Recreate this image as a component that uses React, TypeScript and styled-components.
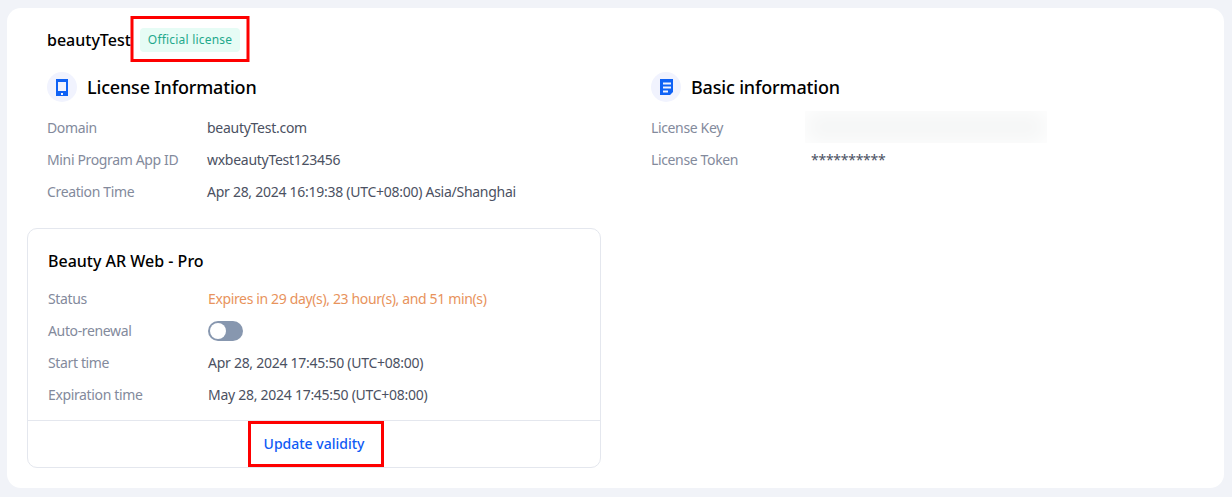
import React from "react"
import styled, { createGlobalStyle } from "styled-components"

const GlobalStyle = createGlobalStyle`
  html, body {
    margin: 0;
    padding: 0;
    background: #f1f3f8;
    font-family: "Noto Sans", "Open Sans", sans-serif;
  }
`

const Page = styled.div`
  width: 1232px;
  height: 497px;
  box-sizing: border-box;
  padding: 8px 8px 9px 7px;
`

const Panel = styled.div`
  box-sizing: border-box;
  height: 480px;
  background: #fff;
  border-radius: 14px;
  padding: 17px 20px 20px 20px;
`

const TitleRow = styled.div`
  display: flex;
  align-items: center;
  height: 30px;
  padding-left: 20px;
`

const AppName = styled.span`
  font-size: 16px;
  font-weight: 500;
  letter-spacing: 0;
  color: #000;
`

const Annotated = styled.div`
  position: relative;
  display: flex;
  justify-content: center;
`

const RedBox = styled.div<{ $w: number; $h: number; $dx?: number; $dy?: number }>`
  position: absolute;
  top: calc(50% + ${p => p.$dy ?? 0}px);
  left: calc(50% + ${p => p.$dx ?? 0}px);
  width: ${p => p.$w}px;
  height: ${p => p.$h}px;
  box-sizing: border-box;
  border: 3px solid #fe0000;
  transform: translate(-50%, -50%);
`

const Badge = styled.span`
  margin-left: 9px;
  padding: 0 8px;
  height: 24px;
  line-height: 24px;
  border-radius: 4px;
  background: #e6fcf5;
  color: #1fa98c;
  font-size: 12px;
  letter-spacing: 0.2px;
`

const Columns = styled.div`
  display: grid;
  grid-template-columns: 604px 1fr;
  margin-top: 17px;
`

const Section = styled.div`
  padding-left: 20px;
`

const SectionHead = styled.div`
  display: flex;
  align-items: center;
  gap: 10px;
  height: 30px;
  margin-bottom: 9px;
`

const IconCircle = styled.div`
  width: 30px;
  height: 30px;
  border-radius: 50%;
  background: #f1f3fe;
  display: flex;
  align-items: center;
  justify-content: center;
`

const SectionTitle = styled.h2`
  margin: 0;
  font-size: 18px;
  font-weight: 500;
  letter-spacing: -0.17px;
  color: #000;
`

const Row = styled.div`
  display: grid;
  grid-template-columns: 160px 1fr;
  align-items: center;
  height: 32px;
  font-size: 14px;
`

const Label = styled.span`
  color: #838a9c;
  letter-spacing: -0.36px;
`

const Value = styled.span<{ $tone?: string }>`
  color: ${p => p.$tone ?? "#4b5162"};
  letter-spacing: ${p => (p.$tone ? "-0.36px" : "-0.27px")};
`

const BlurredKey = styled.div`
  width: 242px;
  height: 32px;
  margin-left: -6px;
  background: #f5f6f6;
  box-shadow: inset 0 0 22px #fff;
`

const ProductCard = styled.div`
  width: 574px;
  height: 240px;
  box-sizing: border-box;
  margin-top: 21px;
  border: 1px solid #e4e7ee;
  border-radius: 10px;
  display: flex;
  flex-direction: column;
`

const CardBody = styled.div`
  flex: 1;
  padding: 17px 20px 0;
`

const CardTitle = styled.div`
  font-size: 16px;
  font-weight: 500;
  color: #000;
  line-height: 30px;
  margin-bottom: 6px;
`

const CardFooter = styled.div`
  height: 46px;
  border-top: 1px solid #e4e7ee;
  display: flex;
  align-items: center;
  justify-content: center;
`

const LinkButton = styled.a`
  font-size: 14px;
  line-height: 18px;
  font-weight: 500;
  color: #0f5bf5;
`

const Toggle = styled.div`
  position: relative;
  width: 35px;
  height: 20px;
  margin-top: 1px;
  border-radius: 10px;
  background: #8797af;
`

const Knob = styled.div`
  position: absolute;
  left: 2px;
  top: 2px;
  width: 16px;
  height: 16px;
  border-radius: 50%;
  background: #fff;
`

export default function App() {
  return (
    <Page>
      <GlobalStyle />
      <Panel>
        <TitleRow>
          <AppName>beautyTest</AppName>
          <Annotated>
            <Badge>Official license</Badge>
            <RedBox $w={119} $h={46} $dx={4} $dy={-1} />
          </Annotated>
        </TitleRow>
        <Columns>
          <div>
            <Section>
              <SectionHead>
                <IconCircle>
                  <svg width="12" height="17" viewBox="0 0 12 17">
                    <path
                      fill="#0f62f5"
                      fillRule="evenodd"
                      d="M0 0h12v17H0V0zm2 3v9h8V3H2zm3 11v2h2v-2H5z"
                    />
                  </svg>
                </IconCircle>
                <SectionTitle>License Information</SectionTitle>
              </SectionHead>
              <Row>
                <Label>Domain</Label>
                <Value>beautyTest.com</Value>
              </Row>
              <Row>
                <Label>Mini Program App ID</Label>
                <Value>wxbeautyTest123456</Value>
              </Row>
              <Row>
                <Label>Creation Time</Label>
                <Value>Apr 28, 2024 16:19:38 (UTC+08:00) Asia/Shanghai</Value>
              </Row>
            </Section>
            <ProductCard>
              <CardBody>
                <CardTitle>Beauty AR Web - Pro</CardTitle>
                <Row>
                  <Label>Status</Label>
                  <Value $tone="#e8935c">Expires in 29 day(s), 23 hour(s), and 51 min(s)</Value>
                </Row>
                <Row>
                  <Label>Auto-renewal</Label>
                  <Toggle>
                    <Knob />
                  </Toggle>
                </Row>
                <Row>
                  <Label>Start time</Label>
                  <Value>Apr 28, 2024 17:45:50 (UTC+08:00)</Value>
                </Row>
                <Row>
                  <Label>Expiration time</Label>
                  <Value>May 28, 2024 17:45:50 (UTC+08:00)</Value>
                </Row>
              </CardBody>
              <CardFooter>
                <Annotated>
                  <LinkButton>Update validity</LinkButton>
                  <RedBox $w={136} $h={46} $dx={2} />
                </Annotated>
              </CardFooter>
            </ProductCard>
          </div>
          <Section>
            <SectionHead>
              <IconCircle>
                <svg width="13" height="16" viewBox="0 0 13 16">
                  <path
                    fill="#0f62f5"
                    fillRule="evenodd"
                    d="M0 0h13v13l-3 3H0V0zm3 3.5v2h8v-2H3zm0 4v2h8v-2H3zm0 4v2h5v-2H3z"
                  />
                </svg>
              </IconCircle>
              <SectionTitle>Basic information</SectionTitle>
            </SectionHead>
            <Row>
              <Label>License Key</Label>
              <BlurredKey />
            </Row>
            <Row>
              <Label>License Token</Label>
              <Value>**********</Value>
            </Row>
          </Section>
        </Columns>
      </Panel>
    </Page>
  )
}
